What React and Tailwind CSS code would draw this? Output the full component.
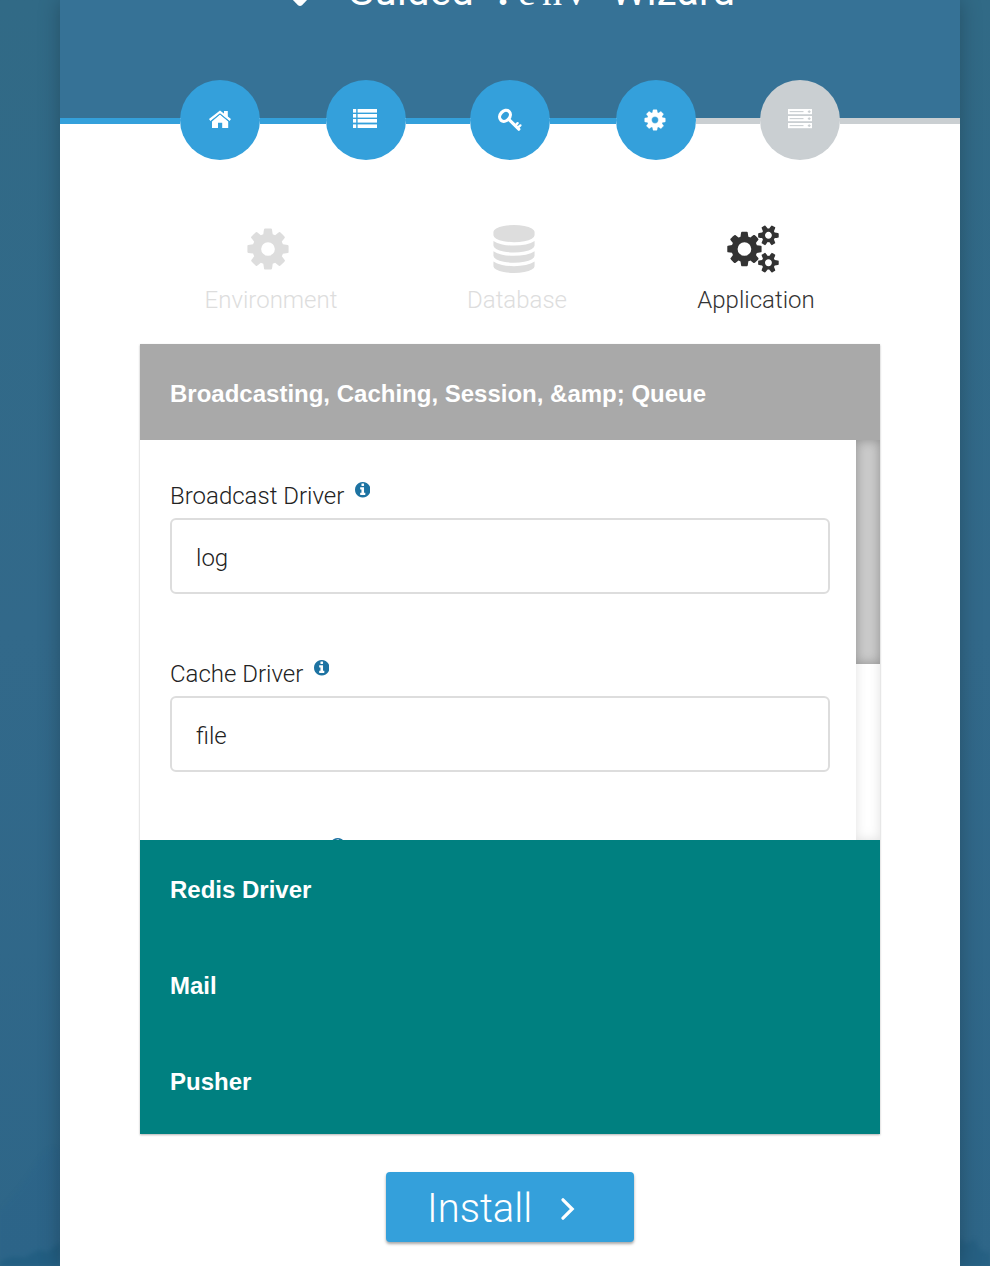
import React from 'react';

const COG =
  'M1152 896q0-106-75-181t-181-75-181 75-75 181 75 181 181 75 181-75 75-181zm512-109v222q0 12-8 23t-20 13l-185 28q-19 54-39 91 35 50 107 138 10 12 10 25t-9 23q-27 37-99 108t-94 71q-12 0-26-9l-138-108q-44 23-91 38-16 136-29 186-7 28-36 28h-222q-14 0-24.5-8.5t-11.5-21.5l-28-184q-49-16-90-37l-141 107q-10 9-25 9-14 0-25-11-126-114-165-168-7-10-7-23 0-12 8-23 15-21 51-66.5t54-70.5q-27-50-41-99l-183-27q-13-2-21-12.5t-8-23.5v-222q0-12 8-23t19-13l186-28q14-46 39-92-40-57-107-138-10-12-10-24 0-10 9-23 26-36 98.5-107.5t94.5-71.5q13 0 26 10l138 107q44-23 91-38 16-136 29-186 7-28 36-28h222q14 0 24.5 8.5t11.5 21.5l28 184q49 16 90 37l142-107q9-9 24-9 13 0 25 10 129 119 165 170 7 8 7 22 0 12-8 23-15 21-51 66.5t-54 70.5q26 50 41 98l183 28q13 2 21 12.5t8 23.5z';
const COGS =
  'M832 896q0-106-75-181t-181-75-181 75-75 181 75 181 181 75 181-75 75-181zm768 512q0-52-38-90t-90-38-90 38-38 90q0 53 37.5 90.5t90.5 37.5 90.5-37.5 37.5-90.5zm0-1024q0-52-38-90t-90-38-90 38-38 90q0 53 37.5 90.5t90.5 37.5 90.5-37.5 37.5-90.5zm-384 421v185q0 10-7 19.5t-16 10.5l-155 24q-11 35-32 76 34 48 90 115 7 11 7 20 0 12-7 19-23 30-82.5 89.5t-78.5 59.5q-11 0-21-7l-115-90q-37 19-77 31-11 108-23 155-7 24-30 24h-186q-11 0-20-7.5t-10-17.5l-23-153q-34-10-75-31l-118 89q-7 7-20 7-11 0-21-8-144-133-144-160 0-9 7-19 10-14 41-53t47-61q-23-44-35-82l-152-24q-10-1-17-9.5t-7-19.5v-185q0-10 7-19.5t16-10.5l155-24q11-35 32-76-34-48-90-115-7-11-7-20 0-12 7-20 22-30 82-89t79-59q11 0 21 7l115 90q34-18 77-32 11-108 23-154 7-24 30-24h186q11 0 20 7.5t10 17.5l23 153q34 10 75 31l118-89q8-7 20-7 11 0 21 8 144 133 144 160 0 8-7 19-12 16-42 54t-45 60q23 48 34 82l152 23q10 2 17 10.5t7 19.5zm640 533v140q0 16-149 31-12 27-30 52 51 113 51 138 0 4-4 7-122 71-124 71-8 0-46-47t-52-68q-20 2-30 2t-30-2q-14 21-52 68t-46 47q-2 0-124-71-4-3-4-7 0-25 51-138-18-25-30-52-149-15-149-31v-140q0-16 149-31 13-29 30-52-51-113-51-138 0-4 4-7 4-2 35-20t59-34 30-16q8 0 46 46.5t52 67.5q20-2 30-2t30 2q51-71 92-112l6-2q4 0 124 70 4 3 4 7 0 25-51 138 17 23 30 52 149 15 149 31zm0-1024v140q0 16-149 31-12 27-30 52 51 113 51 138 0 4-4 7-122 71-124 71-8 0-46-47t-52-68q-20 2-30 2t-30-2q-14 21-52 68t-46 47q-2 0-124-71-4-3-4-7 0-25 51-138-18-25-30-52-149-15-149-31v-140q0-16 149-31 13-29 30-52-51-113-51-138 0-4 4-7 4-2 35-20t59-34 30-16q8 0 46 46.5t52 67.5q20-2 30-2t30 2q51-71 92-112l6-2q4 0 124 70 4 3 4 7 0 25-51 138 17 23 30 52 149 15 149 31z';
const DATABASE =
  'M896 768q237 0 443-43t325-127v170q0 69-103 128t-280 93.5-385 34.5-385-34.5-280-93.5-103-128v-170q119 84 325 127t443 43zm0 768q237 0 443-43t325-127v170q0 69-103 128t-280 93.5-385 34.5-385-34.5-280-93.5-103-128v-170q119 84 325 127t443 43zm0-384q237 0 443-43t325-127v170q0 69-103 128t-280 93.5-385 34.5-385-34.5-280-93.5-103-128v-170q119 84 325 127t443 43zm0-1152q208 0 385 34.5t280 93.5 103 128v128q0 69-103 128t-280 93.5-385 34.5-385-34.5-280-93.5-103-128v-128q0-69 103-128t280-93.5 385-34.5z';
const INFO =
  'M1152 1376v-160q0-14-9-23t-23-9h-96v-512q0-14-9-23t-23-9h-320q-14 0-23 9t-9 23v160q0 14 9 23t23 9h96v320h-96q-14 0-23 9t-9 23v160q0 14 9 23t23 9h448q14 0 23-9t9-23zm-128-896v-160q0-14-9-23t-23-9h-192q-14 0-23 9t-9 23v160q0 14 9 23t23 9h192q14 0 23-9t9-23zm640 416q0 209-103 385.5t-279.5 279.5-385.5 103-385.5-103-279.5-279.5-103-385.5 103-385.5 279.5-279.5 385.5-103 385.5 103 279.5 279.5 103 385.5z';

/* Step icons share a 40x40 box centred in each 80px circle. */
function HomeIcon() {
  return (
    <svg viewBox="0 0 40 40" className="size-10" fill="#fff">
      <path d="M24 11H27.8V18L24 15Z" />
      <path d="M20 14.4L28.2 21.4V28H22.2V22.8H18V28H12V21.4Z" />
      <path d="M9.7 20L20 11.9L30.3 20" fill="none" stroke="#fff" strokeWidth="2.3" />
      <path d="M10.8 21.4L20 14L29.2 21.4" fill="none" stroke="#34a0db" strokeWidth="0.7" />
    </svg>
  );
}

function ListIcon() {
  return (
    <svg viewBox="0 0 40 40" className="size-10" fill="#fff">
      {[9, 14, 19, 24.4].map((y) => (
        <g key={y}>
          <rect x="7" y={y} width="3.2" height="3.6" />
          <rect x="11.6" y={y} width="19.4" height="3.6" />
        </g>
      ))}
    </svg>
  );
}

function KeyIcon() {
  return (
    <svg viewBox="0 0 40 40" className="size-10" fill="none" stroke="#fff" strokeLinecap="round">
      <ellipse cx="15" cy="15.8" rx="4.8" ry="6" strokeWidth="3.2" transform="rotate(42 15 15.8)" />
      <path d="M18.8 19.4L28.8 29.2" strokeWidth="3.2" />
      <path d="M26 24.8L27.6 23.2M28.4 27.2L30.4 25.4" strokeWidth="2.4" />
    </svg>
  );
}

function GearIcon() {
  return (
    <svg viewBox="0 0 1792 1792" className="mr-0.5 mb-px size-6" fill="#fff">
      <path d={COG} stroke="#fff" strokeWidth="30" />
    </svg>
  );
}

function ServerIcon() {
  return (
    <svg viewBox="0 0 40 40" className="size-10">
      {[9, 16, 23].map((y) => (
        <g key={y}>
          <rect x="8" y={y} width="24" height="5.2" fill="#fff" />
          <path d={`M9.6 ${y + 2.6}H23.5`} stroke="#cacfd2" strokeWidth="1.1" />
          <path d={`M27.8 ${y + 2.6}H30.6M29.2 ${y + 1.2}V${y + 4}`} stroke="#cacfd2" strokeWidth="1.1" />
        </g>
      ))}
    </svg>
  );
}

function Circle({ pending, children }) {
  return (
    <li
      className={`flex size-20 shrink-0 items-center justify-center rounded-full ${
        pending ? 'bg-[#cacfd2]' : 'bg-[#34a0db]'
      }`}
    >
      {children}
    </li>
  );
}

function Line({ width, pending }) {
  return (
    <li className={`mt-[38px] h-1.5 shrink-0 ${width} ${pending ? 'bg-[#cacfd2]' : 'bg-[#34a0db]'}`} />
  );
}

function Tab({ width, active, label, path, viewBox, iconWidth }) {
  return (
    <div className={`flex flex-col items-center ${width} ${active ? 'text-[#333]' : 'text-[#ddd]'}`}>
      <svg viewBox={viewBox} className={`mr-1.5 h-12 ${iconWidth}`} fill="currentColor">
        <path d={path} />
      </svg>
      <span className="mt-[11px] text-2xl leading-8 font-light">{label}</span>
    </div>
  );
}

function Field({ label, value }) {
  return (
    <div className="h-[178px]">
      <div className="flex h-[48px] items-start">
        <label className="mt-[10px] text-2xl leading-8 font-light text-[#222]">{label}</label>
        <svg viewBox="128 128 1536 1536" className="ml-[10.5px] mt-[12px] size-[15.5px]" fill="#1d73a2">
          <path d={INFO} />
        </svg>
      </div>
      <div className="flex h-[76px] w-[660px] items-center rounded-md border-2 border-[#ddd] bg-white px-6 pt-1 text-2xl font-light text-[#222]">
        {value}
      </div>
    </div>
  );
}

function Section({ title, className }) {
  return (
    <div
      className={`flex h-24 items-center px-[30px] pt-1 font-['Liberation_Sans',Arial,sans-serif] text-2xl font-bold text-white ${className}`}
    >
      {title}
    </div>
  );
}

export default function App() {
  return (
    <div className="relative flex h-[1266px] w-[990px] overflow-hidden bg-linear-to-b from-[#316a86] via-[#32698a] to-[#2e6688] pl-[60px] font-[Roboto,sans-serif]">
      <svg className="absolute bottom-0 left-0 h-[150px] w-[990px] blur-[2px]" viewBox="0 0 990 150">
        <path d="M0 95Q20 75 35 50T60 35V150H0Z" fill="#24608a" opacity=".15" />
        <path d="M0 146Q12 138 24 142L38 134L48 136L60 126V150H0Z" fill="#145478" opacity=".4" />
        <path d="M958 122L966 128L975 123L980 134L990 137V154H958Z" fill="#145478" opacity=".3" />
      </svg>
      <main className="relative h-full w-[900px] bg-white shadow-[0_0_20px_rgba(0,0,0,0.25)]">
        <header className="h-[118px] overflow-hidden bg-[#367296]">
          <h1 className="-mt-8 flex h-12 items-end text-[40px] leading-[48px] font-normal whitespace-nowrap text-white">
            <svg viewBox="0 0 20 20" className="mb-[10px] ml-[230px] size-5 shrink-0" fill="#fff">
              <path d="M1 12L10 6L19 12L12 19.2Q10 20.6 8 19.2Z" />
            </svg>
            <span className="ml-[37px] w-[151px] tracking-[0.3px]">Guided</span>
            <code className="flex w-[113px] font-['Liberation_Serif',serif] font-normal">
              <span className="w-[20px] font-bold">.</span>
              <span className="w-6">e</span>
              <span className="w-6">n</span>
              <span>v</span>
            </code>
            <span className="tracking-[0.3px]">Wizard</span>
          </h1>
        </header>
        <ul className="relative -mt-[38px] flex h-20 items-start">
          <Line width="w-[120px]" />
          <Circle><HomeIcon /></Circle>
          <Line width="w-[66px]" />
          <Circle><ListIcon /></Circle>
          <Line width="w-[64px]" />
          <Circle><KeyIcon /></Circle>
          <Line width="w-[66px]" />
          <Circle><GearIcon /></Circle>
          <Line width="w-[64px]" pending />
          <Circle pending><ServerIcon /></Circle>
          <Line width="w-[120px]" pending />
        </ul>
        <div className="px-20">
          <nav className="flex h-[184px] pt-[65px]">
            <Tab width="w-[262px]" label="Environment" path={COG} viewBox="0 0 1792 1792" iconWidth="w-12" />
            <Tab width="w-[230px]" label="Database" path={DATABASE} viewBox="0 0 1792 1792" iconWidth="w-12" />
            <Tab width="w-[248px]" active label="Application" path={COGS} viewBox="-64 0 1920 1792" iconWidth="w-[52px]" />
          </nav>
          <div className="shadow-[0_1px_2px_rgba(0,0,0,0.3)]">
            <Section title="Broadcasting, Caching, Session, &amp;amp; Queue" className="bg-[#a9a9a9]" />
            <div className="flex h-[400px] overflow-hidden bg-white">
              <div className="w-[716px] pt-[30px] pl-[30px]">
                <Field label="Broadcast Driver" value="log" />
                <Field label="Cache Driver" value="file" />
                <Field label="Session Driver" />
              </div>
              <div className="h-full w-6 bg-white shadow-[inset_0_0_12px_rgba(0,0,0,0.12)]">
                <div className="h-56 bg-[#cbcbcb] shadow-[inset_0_0_12px_rgba(0,0,0,0.3)]" />
              </div>
            </div>
            <div className="h-[294px] bg-[#008080]">
              <Section title="Redis Driver" className="" />
              <Section title="Mail" className="" />
              <Section title="Pusher" className="" />
            </div>
          </div>
          <div className="flex justify-center pt-[38px]">
            <button className="flex h-[70px] w-[248px] items-center rounded bg-[#34a0db] pl-[41px] text-[40px] font-light text-white shadow-[0_2px_3px_rgba(0,0,0,0.35)]">
              <span className="mt-[3px]">Install</span>
              <svg viewBox="0 0 14 22" className="mt-1 ml-[29px] h-[22px] w-3.5" fill="none" stroke="#fff" strokeWidth="3.2" strokeLinecap="round">
                <path d="M2 1.8L11.2 11L2 20.2" />
              </svg>
            </button>
          </div>
        </div>
      </main>
    </div>
  );
}
